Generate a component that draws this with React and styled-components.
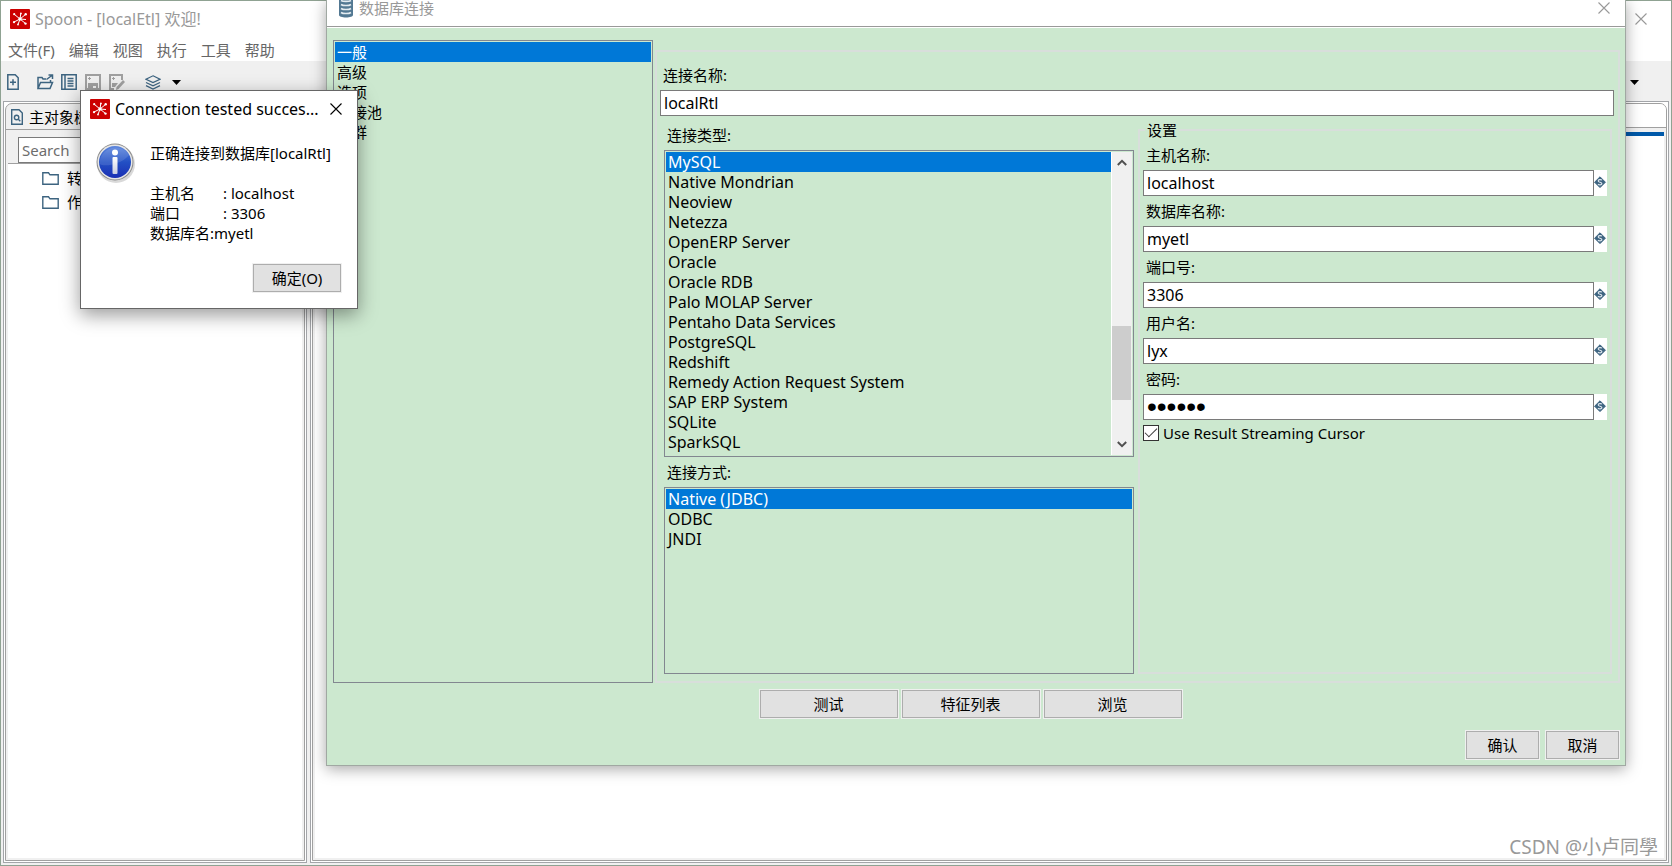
import React, { useState } from "react";
import styled, { createGlobalStyle } from "styled-components";

const GlobalStyle = createGlobalStyle`
  * {
    box-sizing: border-box;
  }

  body {
    margin: 0;
    background: #8fa292;
    font-family: "Noto Sans", "Noto Sans CJK SC", sans-serif;
    font-size: 15px;
    line-height: 20px;
    color: #000;
  }

  button,
  input {
    font: inherit;
    color: inherit;
  }
`;

const databaseTypes = [
  "MySQL",
  "Native Mondrian",
  "Neoview",
  "Netezza",
  "OpenERP Server",
  "Oracle",
  "Oracle RDB",
  "Palo MOLAP Server",
  "Pentaho Data Services",
  "PostgreSQL",
  "Redshift",
  "Remedy Action Request System",
  "SAP ERP System",
  "SQLite",
  "SparkSQL",
];

const settings = [
  { id: "host", label: "主机名称:", value: "localhost" },
  { id: "database", label: "数据库名称:", value: "myetl" },
  { id: "port", label: "端口号:", value: "3306" },
  { id: "user", label: "用户名:", value: "lyx" },
  { id: "password", label: "密码:", value: "secret", type: "password" },
];

/* icons */

const LogoIcon = () => (
  <svg width="20" height="20" viewBox="0 0 20 20" aria-hidden="true">
    <rect width="20" height="20" rx="1" fill="#cc0000" />
    <path
      d="M10 10L4.500 5.500M10 10L10.800 4.500M10 10L15.500 5.500M10 10L4 13M10 10L8 15.500M10 10L15.500 14.500M10 10L16 10.500"
      stroke="#fff"
      strokeWidth="1"
      fill="none"
    />
    <g fill="#fff">
      <circle cx="10" cy="10" r="1.7" />
      <circle cx="4.2" cy="5.2" r="1.1" />
      <circle cx="10.900" cy="4.500" r=".9" />
      <circle cx="15.700" cy="5.200" r="1.2" />
      <circle cx="4" cy="13.200" r="1.1" />
      <circle cx="8" cy="15.500" r=".9" />
      <circle cx="15.500" cy="14.600" r="1.2" />
    </g>
  </svg>
);

const CloseIcon = () => (
  <svg width="12" height="12" viewBox="0 0 12 12" aria-hidden="true">
    <path d="M.5.5l11 11M11.5.5l-11 11" stroke="currentColor" strokeWidth="1.1" />
  </svg>
);

const CaretIcon = () => (
  <svg width="9" height="5" viewBox="0 0 9 5" aria-hidden="true">
    <path d="M0 0h9L4.500 5z" fill="#000" />
  </svg>
);

const NewIcon = () => (
  <svg width="12" height="16" viewBox="0 0 12 16" fill="none" stroke="#3d6480" strokeWidth="1.5" aria-hidden="true">
    <path d="M.8.8h7.400l3 3v11.400H.8zM6 5.200v6M3 8.200h6" />
  </svg>
);

const OpenIcon = () => (
  <svg width="17" height="16" viewBox="0 0 17 16" fill="none" stroke="#3d6480" strokeWidth="1.5" aria-hidden="true">
    <path d="M1 14.500V3.500h4l1 1.500h3M1 14.500l2.500-6h12l-2.500 6zM13.500 8V6M9.500 5.500L15.500 1M11.500 1h4v4" />
  </svg>
);

const ExploreIcon = () => (
  <svg width="16" height="16" viewBox="0 0 16 16" fill="none" stroke="#3d6480" strokeWidth="1.5" aria-hidden="true">
    <path d="M.8.8h14.400v14.400H.8zM4 1v14M6.500 4.500h6M6.500 7h6M6.500 9.500h6M6.500 12h6" />
  </svg>
);

const SaveIcon = () => (
  <svg width="16" height="16" viewBox="0 0 16 16" aria-hidden="true">
    <path d="M1 1h14v14H1z" fill="none" stroke="#a0a0a0" strokeWidth="2" />
    <path d="M3 9h10v6h-2v-3H8v3H3zM3 4h3v1H3zM4 3h1v3H4z" fill="#a0a0a0" />
  </svg>
);

const SaveAsIcon = () => (
  <svg width="16" height="16" viewBox="0 0 16 16" aria-hidden="true">
    <path d="M13 6V1H1v14h4" fill="none" stroke="#a0a0a0" strokeWidth="2" />
    <path d="M3 9h6l-3 4H3zM3 4h3v1H3zM4 3h1v3H4zM14 6l2 2-6.500 7L7 16l.5-3z" fill="#a0a0a0" />
  </svg>
);

const LayersIcon = () => (
  <svg width="16" height="15" viewBox="0 0 16 15" fill="none" stroke="#3d6480" strokeWidth="1.2" aria-hidden="true">
    <path d="M8 .8L15 4.200 8 7.600 1 4.200zM1 7.500l7 3.400 7-3.400M1 10.600L8 14l7-3.400" />
  </svg>
);

const TabIcon = () => (
  <svg width="12" height="16" viewBox="0 0 12 16" fill="none" stroke="#3d6480" strokeWidth="1.4" aria-hidden="true">
    <path d="M.7.7H8l3.300 3.300v11.300H.7zM7.300 10.300l2 2" />
    <circle cx="5.600" cy="8.500" r="2.200" />
  </svg>
);

const FolderIcon = () => (
  <svg width="17" height="13" viewBox="0 0 17 13" fill="none" stroke="#3d6480" strokeWidth="1.4" aria-hidden="true">
    <path d="M.8 12.200V.8h5.700l1.500 2h8.200v9.400z" />
  </svg>
);

const DatabaseIcon = () => (
  <svg width="16" height="19" viewBox="0 0 16 19" aria-hidden="true">
    <path d="M1 0h14v16c0 1.500-3 2.500-7 2.500S1 17.500 1 16z" fill="#527892" />
    <path d="M3 1.500c2 1.200 8 1.200 10 0M3 5.500c2 1.400 8 1.400 10 0M3 9.500c2 1.400 8 1.400 10 0M3 13.500c2 1.400 8 1.400 10 0" stroke="#e3ebf0" strokeWidth="1.600" fill="none" />
  </svg>
);

const VariableIcon = () => (
  <svg width="13" height="13" viewBox="0 0 13 13" aria-hidden="true">
    <path d="M6 .8L11.400 6.200 6 11.600.6 6.200z" fill="#3d6480" stroke="#3d6480" strokeLinejoin="round" />
    <path d="M7.900 4.300C7.200 3.300 4.200 3.300 4.200 4.900c0 1.600 3.700 1 3.700 2.700 0 1.600-3 1.600-3.900.5" stroke="#e2eaf0" strokeWidth="1.100" fill="none" />
  </svg>
);

const InfoIcon = () => (
  <svg width="40" height="40" viewBox="0 0 40 40" aria-hidden="true">
    <defs>
      <linearGradient id="ball" x1="0" y1="0" x2="0" y2="1">
        <stop offset="0" stopColor="#5c86dd" />
        <stop offset=".5" stopColor="#2350c4" />
        <stop offset="1" stopColor="#1a2fb4" />
      </linearGradient>
      <linearGradient id="stem" x1="0" y1="0" x2="0" y2="1">
        <stop offset="0" stopColor="#fff" />
        <stop offset="1" stopColor="#c9cde0" />
      </linearGradient>
    </defs>
    <ellipse cx="20" cy="21" rx="19" ry="19" fill="#000" opacity=".15" />
    <circle cx="19" cy="19" r="18.500" fill="#8b8b8b" />
    <circle cx="19" cy="19" r="17.500" fill="#e6e6e6" />
    <circle cx="19" cy="19" r="16" fill="url(#ball)" />
    <path d="M3.500 21C8 24 25 22 33 12A16 16 0 0 0 3.500 21z" fill="#fff" opacity=".12" />
    <circle cx="19" cy="9.500" r="3" fill="#fff" />
    <rect x="16.500" y="14" width="5" height="17" rx="1" fill="url(#stem)" />
  </svg>
);

const ChevronIcon = ({ down }) => (
  <svg width="10" height="7" viewBox="0 0 10 7" fill="none" stroke="#505050" strokeWidth="2" aria-hidden="true">
    <path d={down ? "M.8 1L5 5.200 9.200 1" : "M.8 6L5 1.800 9.200 6"} />
  </svg>
);

/* main window */

const SpoonWindow = () => (
  <Window>
    <WindowHead>
      <WindowTitle>
        <LogoIcon />
        <TitleText>Spoon - [localEtl] 欢迎!</TitleText>
        <CloseButton aria-label="关闭">
          <CloseIcon />
        </CloseButton>
      </WindowTitle>
      <MenuBar>
        {["文件(F)", "编辑", "视图", "执行", "工具", "帮助"].map((item) => (
          <MenuItem key={item}>{item}</MenuItem>
        ))}
      </MenuBar>
    </WindowHead>
    <Toolbar>
      <ToolButton $gap={18} aria-label="新建"><NewIcon /></ToolButton>
      <ToolButton $gap={7} aria-label="打开"><OpenIcon /></ToolButton>
      <ToolButton $gap={8} aria-label="浏览资源库"><ExploreIcon /></ToolButton>
      <ToolButton $gap={8} aria-label="保存"><SaveIcon /></ToolButton>
      <ToolButton $gap={20} aria-label="另存为"><SaveAsIcon /></ToolButton>
      <ToolButton $gap={11} aria-label="透视图"><LayersIcon /></ToolButton>
      <ToolButton aria-label="选择透视图"><CaretIcon /></ToolButton>
      <ToolbarEnd>
        <ToolButton aria-label="更多"><CaretIcon /></ToolButton>
      </ToolbarEnd>
    </Toolbar>
    <Workspace>
      <Frame $width="304px">
        <FrameInner>
          <Tab>
            <TabIcon />
            主对象树
          </Tab>
          <SearchBar>
            <SearchInput placeholder="Search" aria-label="Search" />
          </SearchBar>
          <Tree>
            {["转换", "作业"].map((item) => (
              <TreeItem key={item}>
                <FolderIcon />
                {item}
              </TreeItem>
            ))}
          </Tree>
        </FrameInner>
      </Frame>
      <Frame>
        <FrameInner>
          <EditorTab />
          <EditorBar />
          <Editor>
            <Watermark>CSDN @小卢同學</Watermark>
          </Editor>
        </FrameInner>
      </Frame>
    </Workspace>
  </Window>
);

/* list with one selected row */

const ListBox = ({ label, items, initial, scroll, ...rest }) => {
  const [selected, setSelected] = useState(initial);

  return (
    <ListFrame {...rest}>
      <List role="listbox" aria-label={label}>
        {items.map((item) => (
          <ListItem
            key={item}
            role="option"
            aria-selected={item === selected}
            $selected={item === selected}
            onClick={() => setSelected(item)}
          >
            {item}
          </ListItem>
        ))}
      </List>
      {scroll && (
        <ScrollBar>
          <ScrollButton aria-label="向上"><ChevronIcon /></ScrollButton>
          <ScrollTrack>
            <ScrollThumb />
          </ScrollTrack>
          <ScrollButton aria-label="向下"><ChevronIcon down /></ScrollButton>
        </ScrollBar>
      )}
    </ListFrame>
  );
};

const DatabaseDialog = () => (
  <DatabaseFrame role="dialog" aria-label="数据库连接">
    <DatabaseTitle>
      <DatabaseIcon />
      <TitleText>数据库连接</TitleText>
      <CloseButton aria-label="关闭">
        <CloseIcon />
      </CloseButton>
    </DatabaseTitle>
    <DatabaseBody>
      <Columns>
        <ListBox
          label="类别"
          items={["一般", "高级", "选项", "连接池", "集群"]}
          initial="一般"
          $width="320px"
        />
        <Group>
          <FieldLabel htmlFor="name">连接名称:</FieldLabel>
          <TextInput id="name" defaultValue="localRtl" />
          <Connection>
            <Lists>
              <FieldLabel as="div">连接类型:</FieldLabel>
              <ListBox
                label="连接类型"
                items={databaseTypes}
                initial="MySQL"
                scroll
                $height="307px"
                $fontSize="16px"
              />
              <AccessLabel as="div">连接方式:</AccessLabel>
              <ListBox
                label="连接方式"
                items={["Native (JDBC)", "ODBC", "JNDI"]}
                initial="Native (JDBC)"
                $height="187px"
                $fontSize="16px"
              />
            </Lists>
            <Settings>
              <Legend>设置</Legend>
              {settings.map(({ id, label, value, type }) => (
                <Field key={id}>
                  <FieldLabel htmlFor={id}>{label}</FieldLabel>
                  <FieldRow>
                    <TextInput id={id} type={type || "text"} defaultValue={value} />
                    <VariableMark><VariableIcon /></VariableMark>
                  </FieldRow>
                </Field>
              ))}
              <CheckLabel>
                <CheckBox type="checkbox" defaultChecked />
                Use Result Streaming Cursor
              </CheckLabel>
            </Settings>
          </Connection>
        </Group>
      </Columns>
      <Actions>
        <Button $width="138px">测试</Button>
        <Button $width="138px">特征列表</Button>
        <Button $width="138px">浏览</Button>
      </Actions>
      <Confirm>
        <Button $width="73px">确认</Button>
        <Button $width="73px">取消</Button>
      </Confirm>
    </DatabaseBody>
  </DatabaseFrame>
);

const MessageDialog = () => (
  <MessageFrame role="alertdialog" aria-label="Connection tested successfully">
    <MessageTitle>
      <LogoIcon />
      <TitleText>Connection tested succes...</TitleText>
      <CloseButton aria-label="关闭">
        <CloseIcon />
      </CloseButton>
    </MessageTitle>
    <MessageBody>
      <InfoIcon />
      <MessageText>
        <p>正确连接到数据库[localRtl]</p>
        <p><Term>主机名</Term>: localhost</p>
        <p><Term>端口</Term>: 3306</p>
        <p>数据库名:myetl</p>
      </MessageText>
    </MessageBody>
    <MessageActions>
      <Button $width="88px">确定(O)</Button>
    </MessageActions>
  </MessageFrame>
);

const App = () => (
  <Desktop>
    <GlobalStyle />
    <SpoonWindow />
    <DatabaseDialog />
    <MessageDialog />
  </Desktop>
);

const Desktop = styled.div`
  position: relative;
  display: flex;
  min-height: 100vh;
  padding: 1px;
  overflow: hidden;
`;

const Window = styled.div`
  flex: 1;
  display: flex;
  flex-direction: column;
  background: #f0f0f0;
`;

const WindowHead = styled.header`
  background: #fff;
  height: 60px;
`;

const WindowTitle = styled.div`
  display: flex;
  align-items: center;
  height: 36px;
  padding: 0 24px 0 9px;
  font-size: 16px;
  color: #999;
`;

const TitleText = styled.span`
  flex: 1;
  margin-left: 5px;
  white-space: nowrap;
`;

const CloseButton = styled.button`
  display: flex;
  padding: 0;
  border: 0;
  background: none;
`;

const MenuBar = styled.nav`
  display: flex;
  gap: 14px;
  padding: 3px 7px;
`;

const MenuItem = styled.button`
  padding: 0;
  border: 0;
  background: none;
  color: #666;
`;

const Toolbar = styled.div`
  display: flex;
  align-items: center;
  height: 40px;
  padding: 2px 32px 0 6px;
`;

const ToolButton = styled.button`
  display: flex;
  padding: 0;
  border: 0;
  background: none;
  margin-right: ${(props) => props.$gap || 0}px;
`;

const ToolbarEnd = styled.div`
  margin-left: auto;
`;

const Workspace = styled.main`
  flex: 1;
  display: flex;
  gap: 3px;
  padding: 0 2px 2px;
`;

const Frame = styled.section`
  display: flex;
  border: 1px solid #a3a5a9;
  padding: 1px;
  background: #fff;
  ${(props) => (props.$width ? `width: ${props.$width};` : "flex: 1;")}
`;

const FrameInner = styled.div`
  flex: 1;
  display: flex;
  flex-direction: column;
  border: 1px solid #a0a0a0;
  border-radius: 7px 7px 0 0;
  background: #f0f0f0;
  overflow: hidden;
`;

const Tab = styled.div`
  display: flex;
  align-items: center;
  gap: 6px;
  height: 26px;
  padding-left: 5px;
  border-bottom: 1px solid #a0a0a0;
`;

const SearchBar = styled.div`
  height: 34px;
  margin: 0 2px;
  padding: 7px 10px 0;
  border-bottom: 1px solid #a0a0a0;
`;

const SearchInput = styled.input`
  width: 100%;
  height: 26px;
  padding: 0 3px;
  border: 1px solid #7a7a7a;
  background: #fff;
  font-size: 15px;

  &::placeholder {
    color: #6d6d6d;
    opacity: 1;
  }
`;

const Tree = styled.ul`
  flex: 1;
  margin: 0 2px 2px;
  padding: 2px 0 0 34px;
  background: #fff;
  list-style: none;
`;

const TreeItem = styled.li`
  display: flex;
  align-items: center;
  gap: 8px;
  height: 24px;
`;

const EditorTab = styled.div`
  height: 24px;
  border-bottom: 1px solid #a0a0a0;
  background: #fff;
`;

const EditorBar = styled.div`
  height: 4px;
  margin: 4px 2px 0;
  background: #0059a9;
`;

const Editor = styled.div`
  flex: 1;
  display: flex;
  align-items: flex-end;
  justify-content: flex-end;
  margin: 0 2px 2px;
  padding: 0 6px 0 0;
  background: #fff;
`;

const Watermark = styled.span`
  font-size: 19px;
  line-height: 22px;
  color: #999;
`;

const DatabaseFrame = styled.div`
  position: absolute;
  top: 0;
  left: 326px;
  right: 46px;
  border: 1px solid #a0a8a2;
  border-top: 0;
  background: #cce8cf;
  box-shadow: 0 3px 14px rgba(0, 0, 0, 0.35);
`;

const DatabaseTitle = styled.div`
  display: flex;
  align-items: center;
  height: 27px;
  padding: 0 15px 10px 11px;
  border-bottom: 1px solid #999;
  background: #fff;
  line-height: 16px;
  color: #999;
`;

const DatabaseBody = styled.div`
  padding: 12px 5px 6px 6px;
  border-top: 1px solid #fff;
`;

const Columns = styled.div`
  display: flex;
  gap: 2px;
`;

const ListFrame = styled.div`
  display: flex;
  flex-shrink: 0;
  width: ${(props) => props.$width || "100%"};
  height: ${(props) => props.$height || "auto"};
  padding: 1px;
  border: 1px solid #828790;
  font-size: ${(props) => props.$fontSize || "15px"};
`;

const List = styled.ul`
  flex: 1;
  margin: 0;
  padding: 0;
  list-style: none;
`;

const ListItem = styled.li`
  height: 20px;
  padding-left: 2px;
  white-space: nowrap;
  cursor: default;
  background: ${(props) => (props.$selected ? "#0078d7" : "transparent")};
  color: ${(props) => (props.$selected ? "#fff" : "#000")};
`;

const ScrollBar = styled.div`
  display: flex;
  flex-direction: column;
  width: 21px;
  padding-right: 1px;
  border-left: 1px solid #fff;
  background: #f0f0f0;
`;

const ScrollButton = styled.button`
  display: flex;
  align-items: center;
  justify-content: center;
  height: 21px;
  padding: 0;
  border: 0;
  background: none;
`;

const ScrollTrack = styled.div`
  flex: 1;
  display: flex;
  flex-direction: column;
  justify-content: flex-end;
  padding-bottom: 34px;
`;

const ScrollThumb = styled.div`
  height: 74px;
  background: #cdcdcd;
`;

const Group = styled.section`
  flex: 1;
  margin-top: 10px;
  padding: 13px 4px 7px 3px;
  border: 2px solid #d8dedb;
`;

const FieldLabel = styled.label`
  display: block;
  padding-left: 3px;
  margin-bottom: 5px;
`;

const TextInput = styled.input`
  display: block;
  width: 100%;
  height: 26px;
  padding: 0 3px;
  border: 1px solid #7a7a7a;
  background: #fff;
  font-size: 16px;

  &[type="password"] {
    font-family: "Liberation Sans", sans-serif;
    font-size: 28px;
  }
`;

const Connection = styled.div`
  display: flex;
  gap: 4px;
  padding: 0 2px 0 4px;
`;

const Lists = styled.div`
  width: 470px;
  padding-top: 9px;
`;

const AccessLabel = styled(FieldLabel)`
  margin-top: 5px;
`;

const Settings = styled.fieldset`
  flex: 1;
  min-width: 0;
  margin: 4px 0 0;
  padding: 5px 3px;
  border: 2px solid #d8dedb;
`;

const Legend = styled.legend`
  margin-left: 2px;
  padding: 0 2px;
`;

const Field = styled.div`
  margin-bottom: 5px;
`;

const FieldRow = styled.div`
  display: flex;
`;

const VariableMark = styled.span`
  display: flex;
  height: 26px;
  padding-top: 6px;
  background: #fff;
`;

const CheckLabel = styled.label`
  display: flex;
  align-items: center;
  gap: 4px;
  line-height: 16px;
`;

const CheckBox = styled.input`
  appearance: none;
  display: grid;
  place-content: center;
  width: 16px;
  height: 16px;
  margin: 0;
  border: 1px solid #333;
  background: #fff;

  &:checked::after {
    content: "";
    width: 11px;
    height: 5px;
    margin-bottom: 4px;
    border: solid #333;
    border-width: 0 0 1px 1px;
    transform: rotate(-45deg);
  }
`;

const Button = styled.button`
  width: ${(props) => props.$width};
  height: 28px;
  padding: 0;
  border: 1px solid #adadad;
  outline: 1px solid #f0f0f0;
  background: #e1e1e1;
`;

const Actions = styled.div`
  display: flex;
  justify-content: center;
  gap: 4px;
  margin-top: 7px;
  padding-right: 12px;
`;

const Confirm = styled.div`
  display: flex;
  justify-content: flex-end;
  gap: 7px;
  margin-top: 13px;
  padding-right: 1px;
`;

const MessageFrame = styled.div`
  position: absolute;
  top: 90px;
  left: 80px;
  width: 278px;
  border: 1px solid #666;
  background: #fff;
  box-shadow: 0 6px 18px rgba(0, 0, 0, 0.4);
`;

const MessageTitle = styled.div`
  display: flex;
  align-items: center;
  height: 36px;
  padding: 0 15px 0 9px;
  font-size: 16px;
`;

const MessageBody = styled.div`
  display: flex;
  gap: 14px;
  padding: 16px 15px 0;
`;

const MessageText = styled.div`
  p {
    margin: 0;
    white-space: nowrap;
  }

  p:first-child {
    margin-bottom: 20px;
  }
`;

const Term = styled.span`
  display: inline-block;
  width: 73px;
`;

const MessageActions = styled.div`
  display: flex;
  justify-content: flex-end;
  padding: 21px 16px 16px;
`;

export default App;
